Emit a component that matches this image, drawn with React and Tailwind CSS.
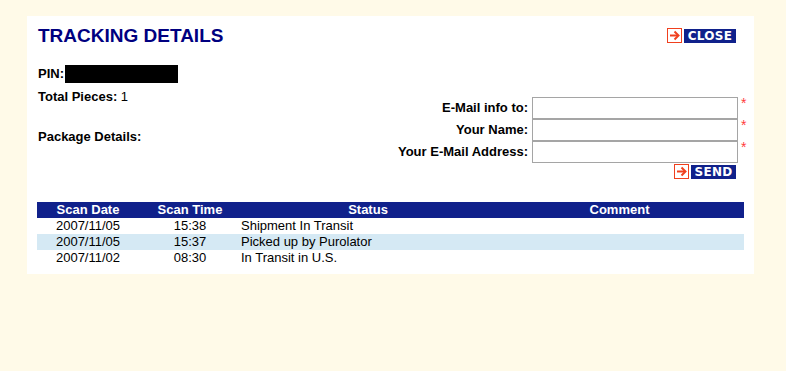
import React from 'react';

function ArrowBox() {
    return (
        <span className="flex h-[15px] w-[15px] items-center justify-center border border-[#f0401e] bg-white">
            <svg width="11" height="11" viewBox="0 0 11 11">
                <path d="M1 5.5h8" stroke="#f0401e" strokeWidth="2" />
                <path d="M5.5 1.5l4 4-4 4" stroke="#f0401e" strokeWidth="2" fill="none" />
            </svg>
        </span>
    );
}

function NavButton({ label, width }) {
    return (
        <div className="flex items-center gap-[2px]">
            <ArrowBox />
            <span
                className={`flex h-[14px] items-center justify-center bg-[#10218b] text-[12px] font-bold leading-none tracking-[0.3px] text-white ${width}`}
                style={{ fontFamily: '"DejaVu Sans", Verdana, sans-serif' }}
            >
                {label}
            </span>
        </div>
    );
}

const fields = ['E-Mail info to:', 'Your Name:', 'Your E-Mail Address:'];

const scans = [
    { date: '2007/11/05', time: '15:38', status: 'Shipment In Transit' },
    { date: '2007/11/05', time: '15:37', status: 'Picked up by Purolator' },
    { date: '2007/11/02', time: '08:30', status: 'In Transit in U.S.' },
];

function App() {
    return (
        <div className="min-h-[371px] w-full bg-[#fffae8] pt-[16px] pl-[27px] font-['Liberation_Sans',Arial,sans-serif] text-[13px] text-black">
            <div className="h-[258px] w-[727px] bg-white pt-[9px]">
                <div className="flex items-center justify-between pl-[11px] pr-[18px]">
                    <h1 className="text-[19px] font-bold leading-[21px] text-[#000080]">TRACKING DETAILS</h1>
                    <NavButton label="CLOSE" width="w-[52px]" />
                </div>

                <div className="mt-[19px] flex h-[18px] items-center pl-[11px] font-bold">
                    <span>PIN:</span>
                    <span className="ml-px h-[18px] w-[113px] bg-black"></span>
                </div>

                <div className="mt-[6px] flex">
                    <div className="flex-1 pl-[11px] leading-[15px]">
                        <div>
                            <span className="font-bold">Total Pieces:</span> 1
                        </div>
                        <div className="mt-[25px] font-bold">Package Details:</div>
                    </div>
                    <div className="mt-[8px] flex flex-col items-end">
                        {fields.map((f) => (
                            <div key={f} className="flex h-[22px]">
                                <label className="flex items-center pr-[4px] font-bold">{f}</label>
                                <input type="text" className="h-[22px] w-[206px] border border-[#a5a5a5] bg-white outline-none" />
                                <span className="w-[16px] pl-[3px] text-[14px] leading-[13px] text-[#ff3b3b]">*</span>
                            </div>
                        ))}
                        <div className="mt-px mr-[18px]">
                            <NavButton label="SEND" width="w-[45px]" />
                        </div>
                    </div>
                </div>

                <div className="mx-[10px] mt-[23px]">
                    <div className="grid h-[16px] grid-cols-[102px_102px_254px_1fr] items-center bg-[#10218b] font-bold leading-[16px] text-white">
                        <div className="text-center">Scan Date</div>
                        <div className="text-center">Scan Time</div>
                        <div className="text-center">Status</div>
                        <div className="text-center">Comment</div>
                    </div>
                    {scans.map((s, i) => (
                        <div
                            key={i}
                            className={`grid h-[16px] grid-cols-[102px_102px_254px_1fr] items-center leading-[16px] ${i % 2 === 1 ? 'bg-[#d5e9f4]' : 'bg-white'}`}
                        >
                            <div className="text-center">{s.date}</div>
                            <div className="text-center">{s.time}</div>
                            <div>{s.status}</div>
                            <div></div>
                        </div>
                    ))}
                </div>
            </div>
        </div>
    );
}

export default App;
